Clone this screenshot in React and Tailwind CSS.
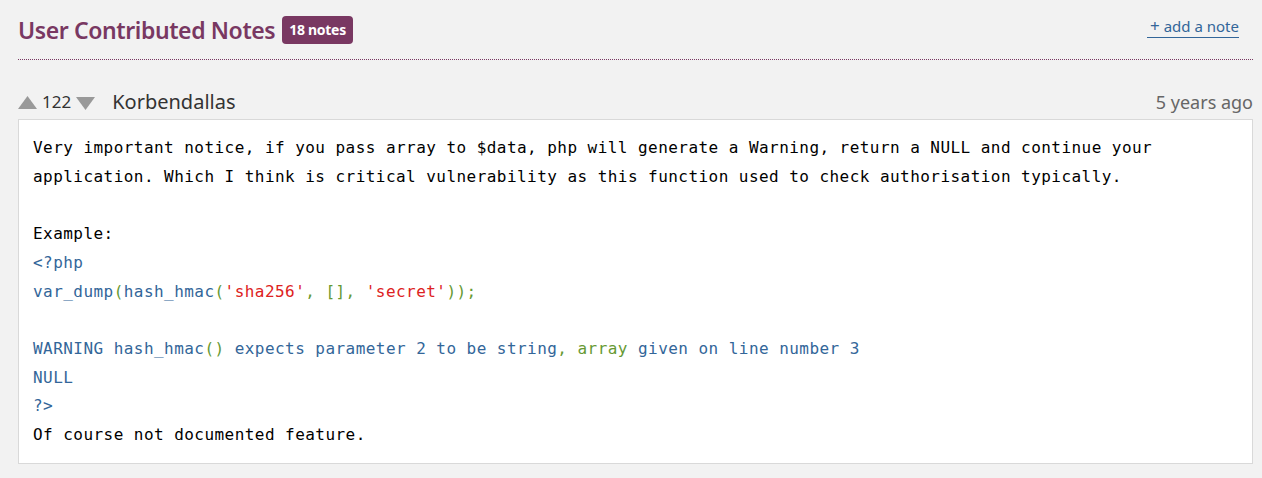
const sans = { fontFamily: '"Noto Sans", "Open Sans", sans-serif' };

const Code = ({ c, children }) => <span className={c}>{children}</span>;

export default function App() {
  const blue = 'text-[#369]';
  const green = 'text-[#693]';
  const red = 'text-[#d22]';

  return (
    <div className="min-h-[478px] bg-[#f2f2f2] pl-[18px] pr-[9px] pt-[14px]" style={sans}>
      {/* Section header */}
      <div className="flex items-center justify-between border-b border-dotted border-[#793862] pb-[13px]">
        <div className="flex items-center gap-[7px]">
          <h3 className="text-[23px] font-semibold text-[#793862] leading-[32px] tracking-[-0.4px]">
            User Contributed Notes
          </h3>
          <span className="rounded-[4px] bg-[#793862] px-[7px] py-[3px] text-[14px] font-bold leading-[22px] text-white tracking-[-0.3px]">
            18 notes
          </span>
        </div>
        <a className="mr-[14px] -mt-[6px] border-b border-[#369] pb-[1px] pl-[3px] text-[15px] leading-[20px] text-[#369]">
          <span className="text-[17px]">+</span> add a note
        </a>
      </div>

      {/* Note */}
      <div className="mt-[30px]">
        <div className="flex items-center justify-between leading-[24px]">
          <div className="flex items-center">
            <svg width="19" height="13" viewBox="0 0 19 13" className="mt-[1px]">
              <polygon points="9.5,0 19,13 0,13" fill="#999" />
            </svg>
            <span className="ml-[5px] text-[17px] text-[#333]">122</span>
            <svg width="19" height="13" viewBox="0 0 19 13" className="ml-[5px] mt-[2px]">
              <polygon points="0,0 19,0 9.5,13" fill="#999" />
            </svg>
            <span className="ml-[17px] text-[20px] text-[#333]">Korbendallas</span>
          </div>
          <span className="text-[18px] text-[#666]">5 years ago</span>
        </div>
        <div
          className="mt-[5px] border border-[#d9d9d9] bg-white px-[14px] pt-[14px] pb-[13px] text-[16px] leading-[28.7px] tracking-[0.45px] text-black whitespace-pre"
          style={{ fontFamily: '"DejaVu Sans Mono", "Liberation Mono", monospace' }}
        >
          <div>Very important notice, if you pass array to $data, php will generate a Warning, return a NULL and continue your</div>
          <div>application. Which I think is critical vulnerability as this function used to check authorisation typically.</div>
          <div>&nbsp;</div>
          <div>Example:</div>
          <div className={blue}>&lt;?php</div>
          <div className={blue}>
            var_dump<Code c={green}>(</Code>hash_hmac<Code c={green}>(</Code>
            <Code c={red}>'sha256'</Code>
            <Code c={green}>, [], </Code>
            <Code c={red}>'secret'</Code>
            <Code c={green}>));</Code>
          </div>
          <div>&nbsp;</div>
          <div className={blue}>
            WARNING hash_hmac<Code c={green}>()</Code> expects parameter 2 to be string<Code c={green}>, array </Code>given on line number 3
          </div>
          <div className={blue}>NULL</div>
          <div className={blue}>?&gt;</div>
          <div>Of course not documented feature.</div>
        </div>
      </div>
    </div>
  );
}
